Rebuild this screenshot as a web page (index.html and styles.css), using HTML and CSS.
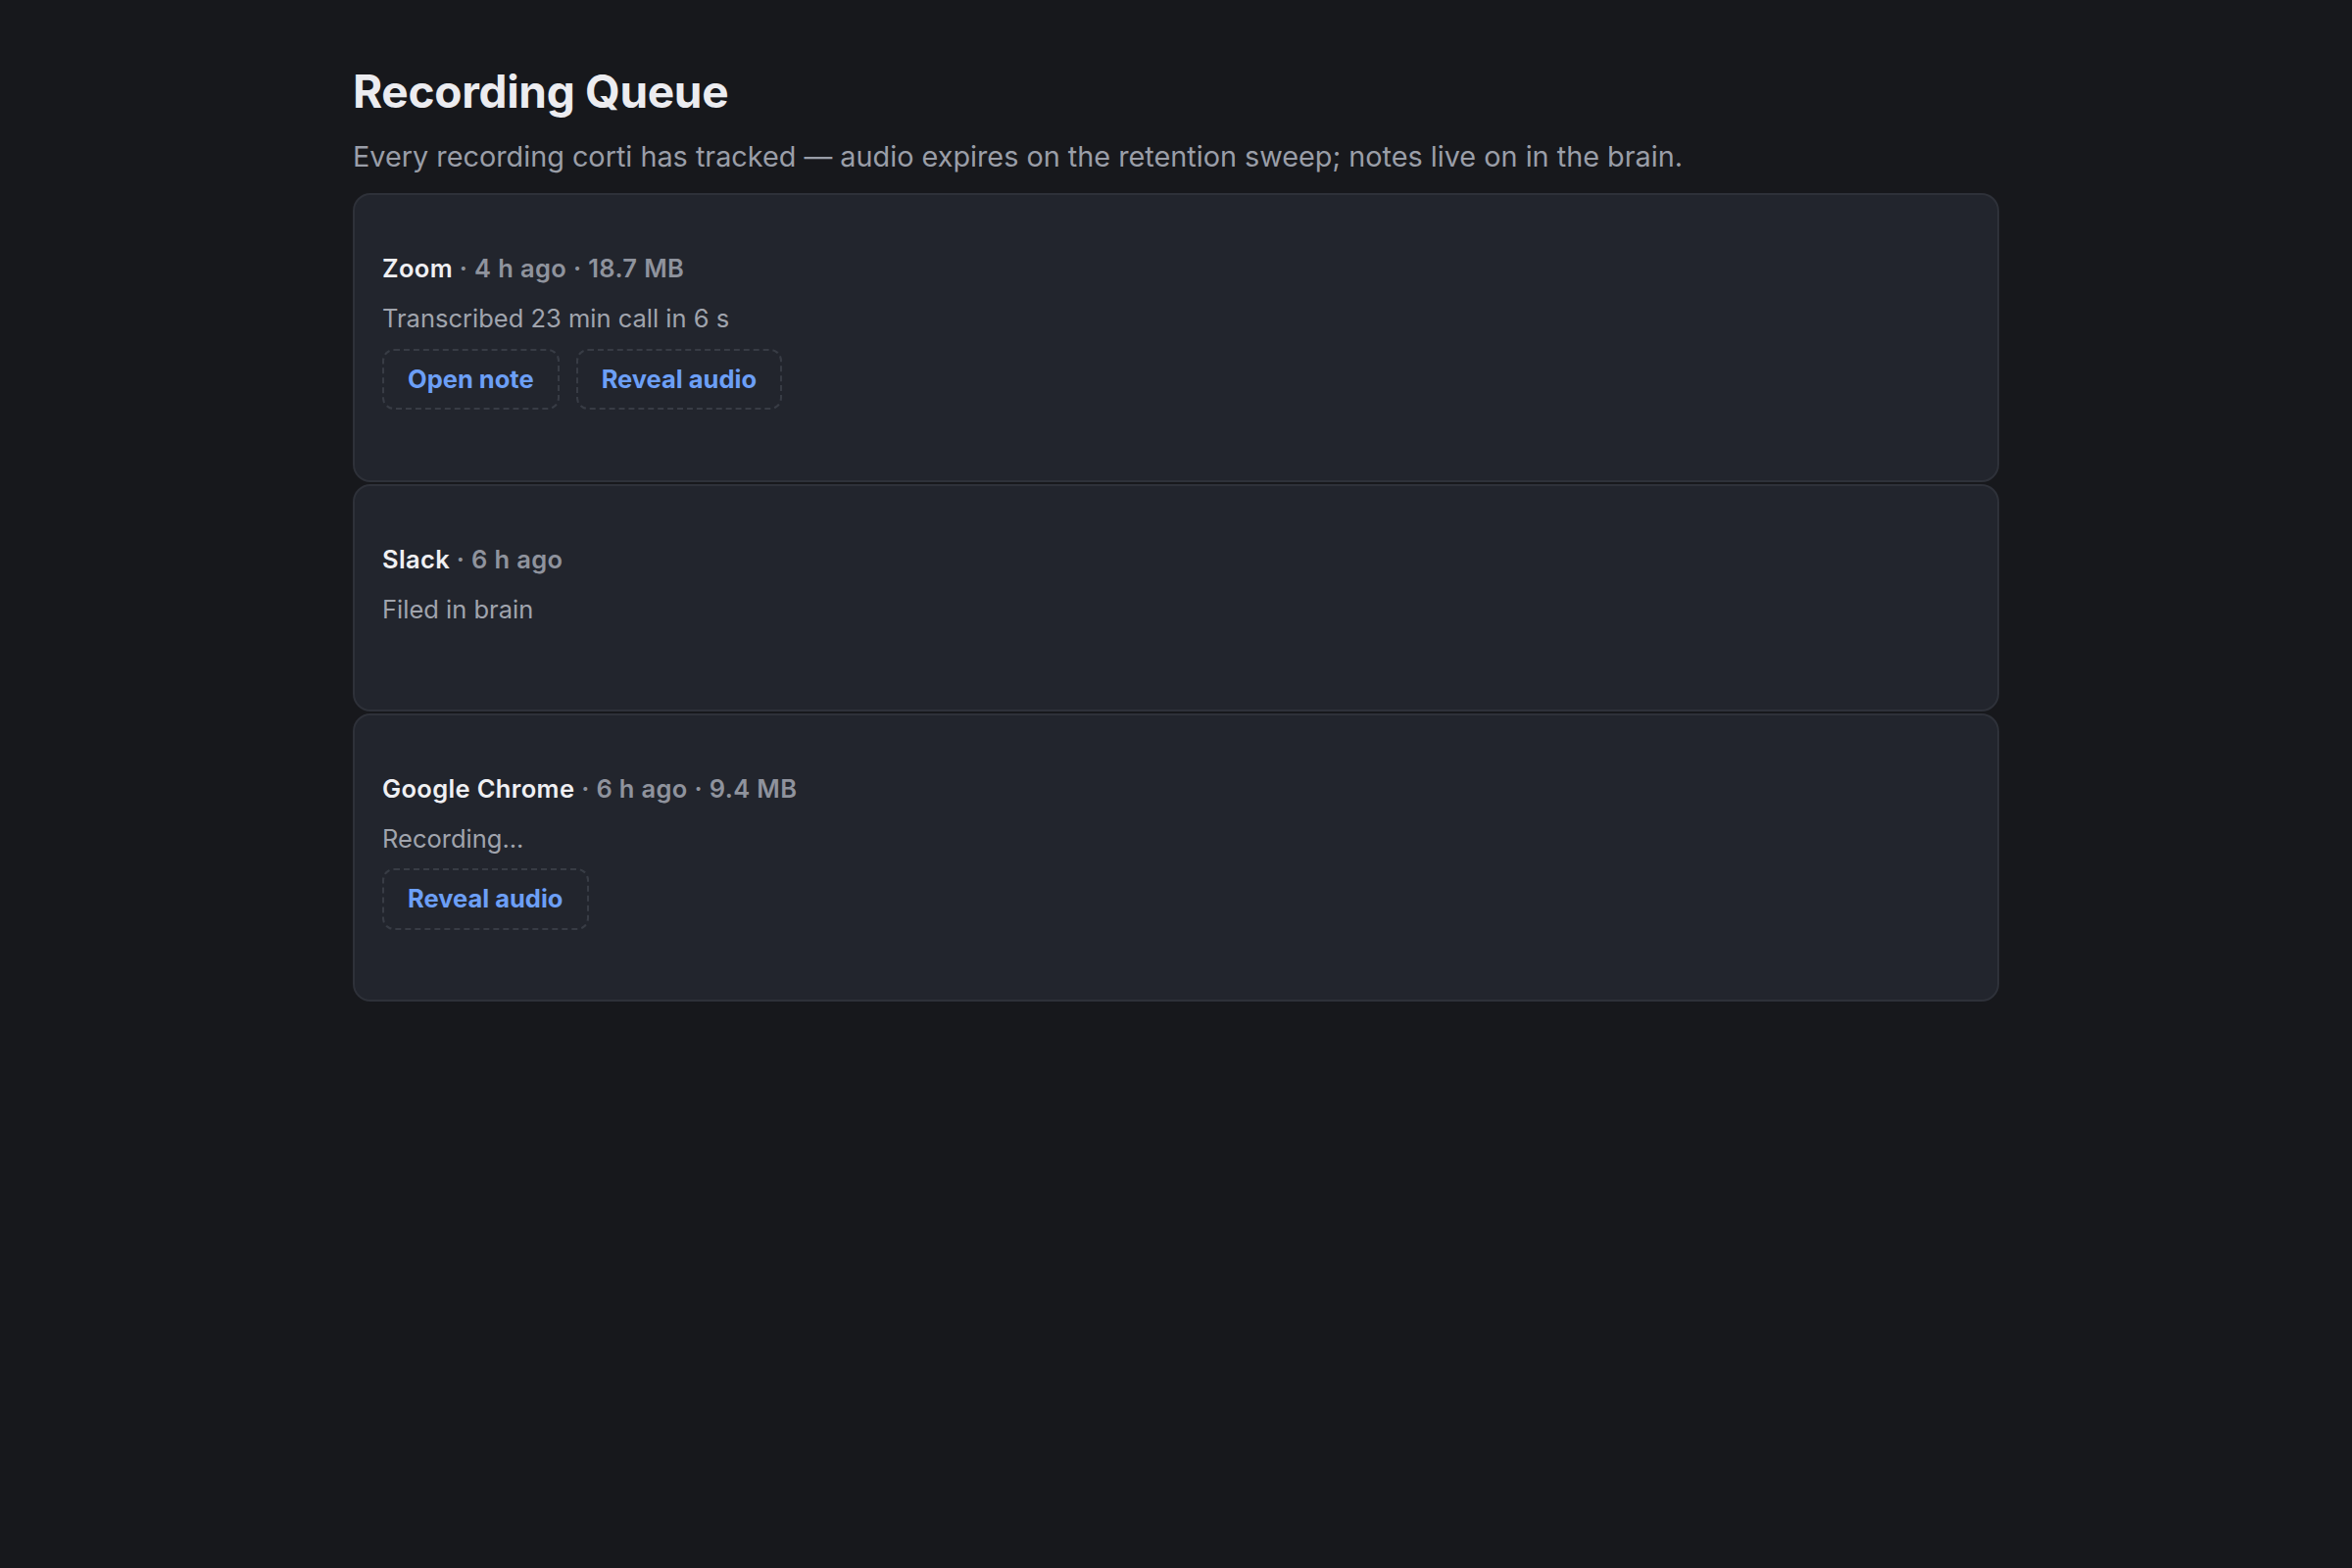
FILE: index.html
```html
<!DOCTYPE html>
<html lang="en">
<head>
    <meta charset="UTF-8">
    <meta name="viewport" content="width=device-width, initial-scale=1.0">
    <title>Recording Queue</title>
    <link rel="stylesheet" href="styles.css">
</head>
<body>
    <div class="container">
        <h1>Recording Queue</h1>
        <p class="lead">Every recording corti has tracked — audio expires on the retention sweep; notes live on in the brain.</p>

        <ul class="queue">
            <li class="item">
                <div class="item-head"><span class="app">Zoom</span> · 4 h ago · 18.7 MB</div>
                <div class="item-status">Transcribed 23 min call in 6 s</div>
                <div class="item-actions">
                    <button class="link-btn">Open note</button>
                    <button class="link-btn">Reveal audio</button>
                </div>
            </li>
            <li class="item">
                <div class="item-head"><span class="app">Slack</span> · 6 h ago</div>
                <div class="item-status">Filed in brain</div>
            </li>
            <li class="item">
                <div class="item-head"><span class="app">Google Chrome</span> · 6 h ago · 9.4 MB</div>
                <div class="item-status">Recording...</div>
                <div class="item-actions">
                    <button class="link-btn">Reveal audio</button>
                </div>
            </li>
        </ul>
    </div>
</body>
</html>
```

FILE: styles.css
```css
* {
    margin: 0;
    padding: 0;
    box-sizing: border-box;
    font-family: Inter, 'Noto Sans', sans-serif;
}

body {
    background: #17181c;
    color: #e8e9ee;
    min-height: 100vh;
    padding-top: 64.5px;
}

.container {
    max-width: 1680px;
    margin: 0 auto;
}

h1 {
    font-size: 46px;
    line-height: 57.6px;
    font-weight: 700;
    color: #ececf0;
    letter-spacing: -0.3px;
}

.lead {
    margin-top: 19px;
    margin-bottom: 18.5px;
    font-size: 28.8px;
    line-height: 37.5px;
    color: #9a9ea8;
}

.queue {
    list-style: none;
}

.item {
    background: #22252d;
    border: 2px solid #2e3139;
    border-radius: 18px;
    padding: 56px 28px 71.5px;
    margin-bottom: 2px;
}

.item-head {
    font-size: 25.5px;
    line-height: 37.5px;
    font-weight: 600;
    letter-spacing: 0.35px;
    color: #8f939d;
}

.app {
    color: #f0f0f3;
}

.item-status {
    margin-top: 13.5px;
    margin-bottom: 12px;
    font-size: 25.5px;
    line-height: 37.5px;
    color: #a0a4ad;
}

.item-actions {
    display: flex;
    gap: 17px;
    margin-top: 6px;
}

.link-btn {
    background: transparent;
    border: 2px dashed #383c45;
    border-radius: 12px;
    padding: 14.25px 24px;
    font-size: 25.5px;
    line-height: 30px;
    font-weight: 700;
    color: #6c9ff6;
    cursor: pointer;
}
```
